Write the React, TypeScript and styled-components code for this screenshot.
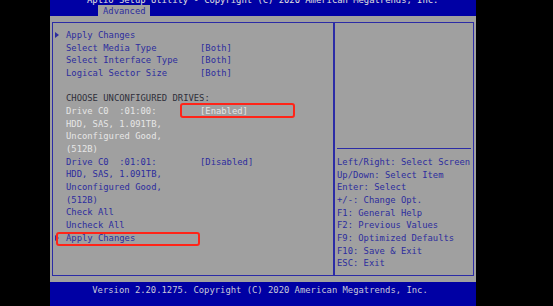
import React from "react";
import styled, { createGlobalStyle } from "styled-components";

const GlobalStyle = createGlobalStyle`
  html, body {
    margin: 0;
    padding: 0;
    background: #000;
    overflow: hidden;
  }
  body {
    font-family: "DejaVu Sans Mono", "Liberation Mono", monospace;
    font-size: 8.85px;
  }
`;

type Tone = "blue" | "white" | "dark";

const toneColor: Record<Tone, string> = {
  blue: "#2d2d9e",
  white: "#e6e6e6",
  dark: "#2f2f3a",
};

const Screen = styled.div`
  width: 426px;
  height: 306px;
  margin-left: 50px;
  background: #a0a0a0;
  display: flex;
  flex-direction: column;
`;

const Header = styled.div`
  height: 16px;
  background: #0000a4;
  overflow: hidden;
  display: flex;
  flex-direction: column;
`;

const Title = styled.div`
  height: 5px;
  line-height: 10px;
  margin-top: -5px;
  padding-left: 37px;
  color: #e0e0e0;
  white-space: pre;
`;

const TabRow = styled.div`
  display: flex;
  align-items: flex-end;
  flex: 1;
  padding-left: 48px;
`;

const Tab = styled.div`
  height: 11px;
  line-height: 12px;
  padding: 0 4px 0 5px;
  background: #a0a0a0;
  color: #2d2d9e;
`;

const Panel = styled.div`
  margin: 6px 2px 0;
  height: 254px;
  box-sizing: border-box;
  border: 1px solid #2c2ca6;
  display: flex;
`;

const LeftPane = styled.div`
  width: 282px;
  padding-top: 6px;
  border-right: 2px solid #2c2ca6;
  box-sizing: border-box;
`;

const RightPane = styled.div`
  flex: 1;
  display: flex;
  flex-direction: column;
  justify-content: flex-end;
  padding: 0 2px 5px;
`;

const Rule = styled.div`
  height: 1px;
  background: #2c2ca6;
  margin-bottom: 7px;
`;

const Row = styled.div<{ $tone: Tone }>`
  position: relative;
  display: flex;
  height: 12.66px;
  line-height: 12.66px;
  color: ${(p) => toneColor[p.$tone]};
  white-space: pre;
`;

const Marker = styled.div`
  width: 13px;
  display: flex;
  align-items: center;
  padding-left: 2px;
  box-sizing: border-box;
`;

const Arrow = styled.span`
  width: 0;
  height: 0;
  border-top: 3px solid transparent;
  border-bottom: 3px solid transparent;
  border-left: 4.5px solid #2d2d9e;
`;

const Label = styled.div`
  width: 134px;
`;

const Value = styled.div`
  position: relative;
`;

const RedBox = styled.div<{ $left: number; $top: number; $w: number; $h: number }>`
  position: absolute;
  left: ${(p) => p.$left}px;
  top: ${(p) => p.$top}px;
  width: ${(p) => p.$w}px;
  height: ${(p) => p.$h}px;
  box-sizing: border-box;
  border: 2px solid #ff2418;
  border-radius: 3px;
`;

const HelpLine = styled.div`
  height: 12.66px;
  line-height: 12.66px;
  color: #2d2d9e;
  white-space: pre;
`;

const Footer = styled.div`
  margin-top: 6px;
  flex: 1;
  background: #0000a4;
  color: #c8c8d8;
  text-align: center;
  line-height: 12px;
  padding-top: 2px;
  padding-right: 6px;
  white-space: pre;
`;

type Item = {
  label: string;
  value?: string;
  tone: Tone;
  arrow?: boolean;
  box?: "value" | "row";
};

const items: Item[] = [
  { label: "Apply Changes", tone: "blue", arrow: true },
  { label: "Select Media Type", value: "[Both]", tone: "blue" },
  { label: "Select Interface Type", value: "[Both]", tone: "blue" },
  { label: "Logical Sector Size", value: "[Both]", tone: "blue" },
  { label: "", tone: "blue" },
  { label: "CHOOSE UNCONFIGURED DRIVES:", tone: "dark" },
  { label: "Drive C0  :01:00:", value: "[Enabled]", tone: "white", box: "value" },
  { label: "HDD, SAS, 1.091TB,", tone: "white" },
  { label: "Unconfigured Good,", tone: "white" },
  { label: "(512B)", tone: "white" },
  { label: "Drive C0  :01:01:", value: "[Disabled]", tone: "blue" },
  { label: "HDD, SAS, 1.091TB,", tone: "blue" },
  { label: "Unconfigured Good,", tone: "blue" },
  { label: "(512B)", tone: "blue" },
  { label: "Check All", tone: "blue" },
  { label: "Uncheck All", tone: "blue" },
  { label: "Apply Changes", tone: "blue", arrow: true, box: "row" },
];

const help = [
  "Left/Right: Select Screen",
  "Up/Down: Select Item",
  "Enter: Select",
  "+/-: Change Opt.",
  "F1: General Help",
  "F2: Previous Values",
  "F9: Optimized Defaults",
  "F10: Save & Exit",
  "ESC: Exit",
];

const App: React.FC = () => {
  return (
    <>
      <GlobalStyle />
      <Screen>
        <Header>
          <Title>Aptio Setup Utility - Copyright (C) 2020 American Megatrends, Inc.</Title>
          <TabRow>
            <Tab>Advanced</Tab>
          </TabRow>
        </Header>

        <Panel>
          <LeftPane>
            {items.map((item, i) => (
              <Row key={i} $tone={item.tone}>
                <Marker>{item.arrow && <Arrow />}</Marker>
                <Label>{item.label}</Label>
                {item.value && (
                  <Value>
                    {item.value}
                    {item.box === "value" && <RedBox $left={-20} $top={-2} $w={115} $h={15} />}
                  </Value>
                )}
                {item.box === "row" && <RedBox $left={3} $top={0.5} $w={144} $h={13.5} />}
              </Row>
            ))}
          </LeftPane>
          <RightPane>
            <Rule />
            {help.map((line) => (
              <HelpLine key={line}>{line}</HelpLine>
            ))}
          </RightPane>
        </Panel>

        <Footer>Version 2.20.1275. Copyright (C) 2020 American Megatrends, Inc.</Footer>
      </Screen>
    </>
  );
};

export default App;
